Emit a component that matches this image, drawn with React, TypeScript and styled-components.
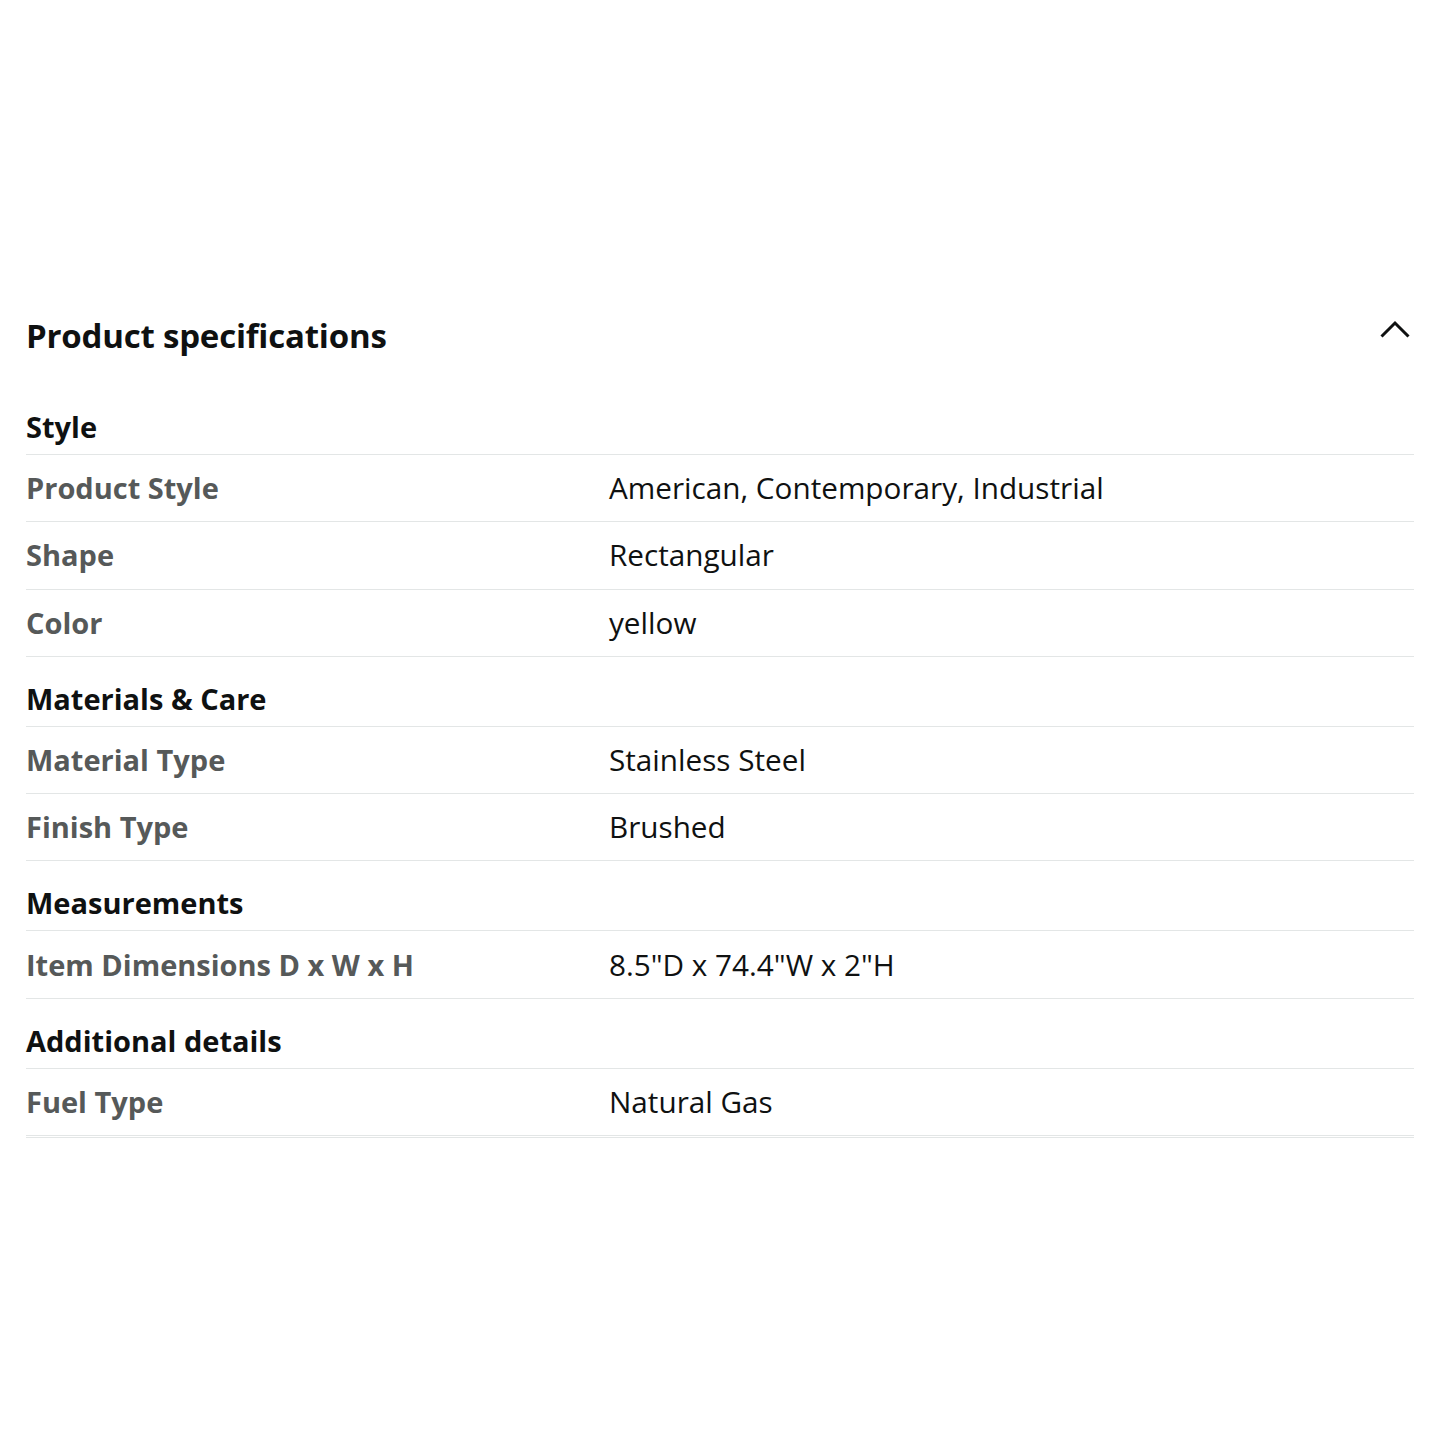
import React from "react";
import styled, { createGlobalStyle } from "styled-components";

const Global = createGlobalStyle`
  html, body { margin: 0; padding: 0; background: #ffffff; }
  body { font-family: "Open Sans", "Noto Sans", Arial, sans-serif; -webkit-font-smoothing: antialiased; }
`;

const Page = styled.main`
  width: 1440px;
  min-height: 1440px;
  box-sizing: border-box;
  padding: 296px 26px 0 26px;
`;

const TitleRow = styled.div`
  display: flex;
  justify-content: space-between;
  align-items: flex-start;
  height: 88px;
  padding-top: 20px;
  box-sizing: border-box;
`;

const Title = styled.h2`
  margin: 0;
  font-size: 33px;
  line-height: 40px;
  font-weight: 700;
  color: #0f1111;
  letter-spacing: -0.2px;
`;

const Toggle = styled.button`
  border: 0;
  background: none;
  padding: 0;
  margin: 4px 3px 0 0;
  width: 32px;
  height: 20px;
  display: block;
  cursor: pointer;
  svg { display: block; }
`;

const Table = styled.div`
  display: flex;
  flex-direction: column;
  border-bottom: 1px solid #e3e6e6;
  padding-bottom: 1px;
`;

const SectionHead = styled.div<{ $first?: boolean }>`
  height: ${(p) => (p.$first ? 71 : 70)}px;
  box-sizing: border-box;
  display: flex;
  align-items: flex-end;
  padding: 0 0 7px 0;
  font-size: 29px;
  line-height: 40px;
  font-weight: 700;
  color: #0f1111;
  border-bottom: 1px solid #e3e6e6;
`;

const Row = styled.div`
  display: grid;
  grid-template-columns: 583px 1fr;
  align-items: center;
  height: 67.3px;
  box-sizing: border-box;
  border-bottom: 1px solid #e3e6e6;
  font-size: 29px;
  line-height: 40px;
`;

const Label = styled.div`
  font-weight: 700;
  color: #565959;
`;

const Value = styled.div`
  font-weight: 400;
  font-size: 29.7px;
  color: #0f1111;
`;

type Section = { title: string; rows: [string, string][] };

const sections: Section[] = [
  {
    title: "Style",
    rows: [
      ["Product Style", "American, Contemporary, Industrial"],
      ["Shape", "Rectangular"],
      ["Color", "yellow"],
    ],
  },
  {
    title: "Materials & Care",
    rows: [
      ["Material Type", "Stainless Steel"],
      ["Finish Type", "Brushed"],
    ],
  },
  {
    title: "Measurements",
    rows: [["Item Dimensions D x W x H", '8.5"D x 74.4"W x 2"H']],
  },
  {
    title: "Additional details",
    rows: [["Fuel Type", "Natural Gas"]],
  },
];

export default function App() {
  return (
    <>
      <Global />
      <Page>
        <TitleRow>
          <Title>Product specifications</Title>
          <Toggle aria-label="Collapse">
            <svg width="32" height="20" viewBox="0 0 32 20">
              <path d="M2.5 16.5 L16 3 L29.5 16.5" fill="none" stroke="#0f1111" strokeWidth="3" strokeLinecap="butt" strokeLinejoin="miter" />
            </svg>
          </Toggle>
        </TitleRow>
        <Table>
          {sections.map((s, i) => (
            <React.Fragment key={s.title}>
              <SectionHead $first={i === 0}>{s.title}</SectionHead>
              {s.rows.map(([k, v]) => (
                <Row key={k}>
                  <Label>{k}</Label>
                  <Value>{v}</Value>
                </Row>
              ))}
            </React.Fragment>
          ))}
        </Table>
      </Page>
    </>
  );
}
